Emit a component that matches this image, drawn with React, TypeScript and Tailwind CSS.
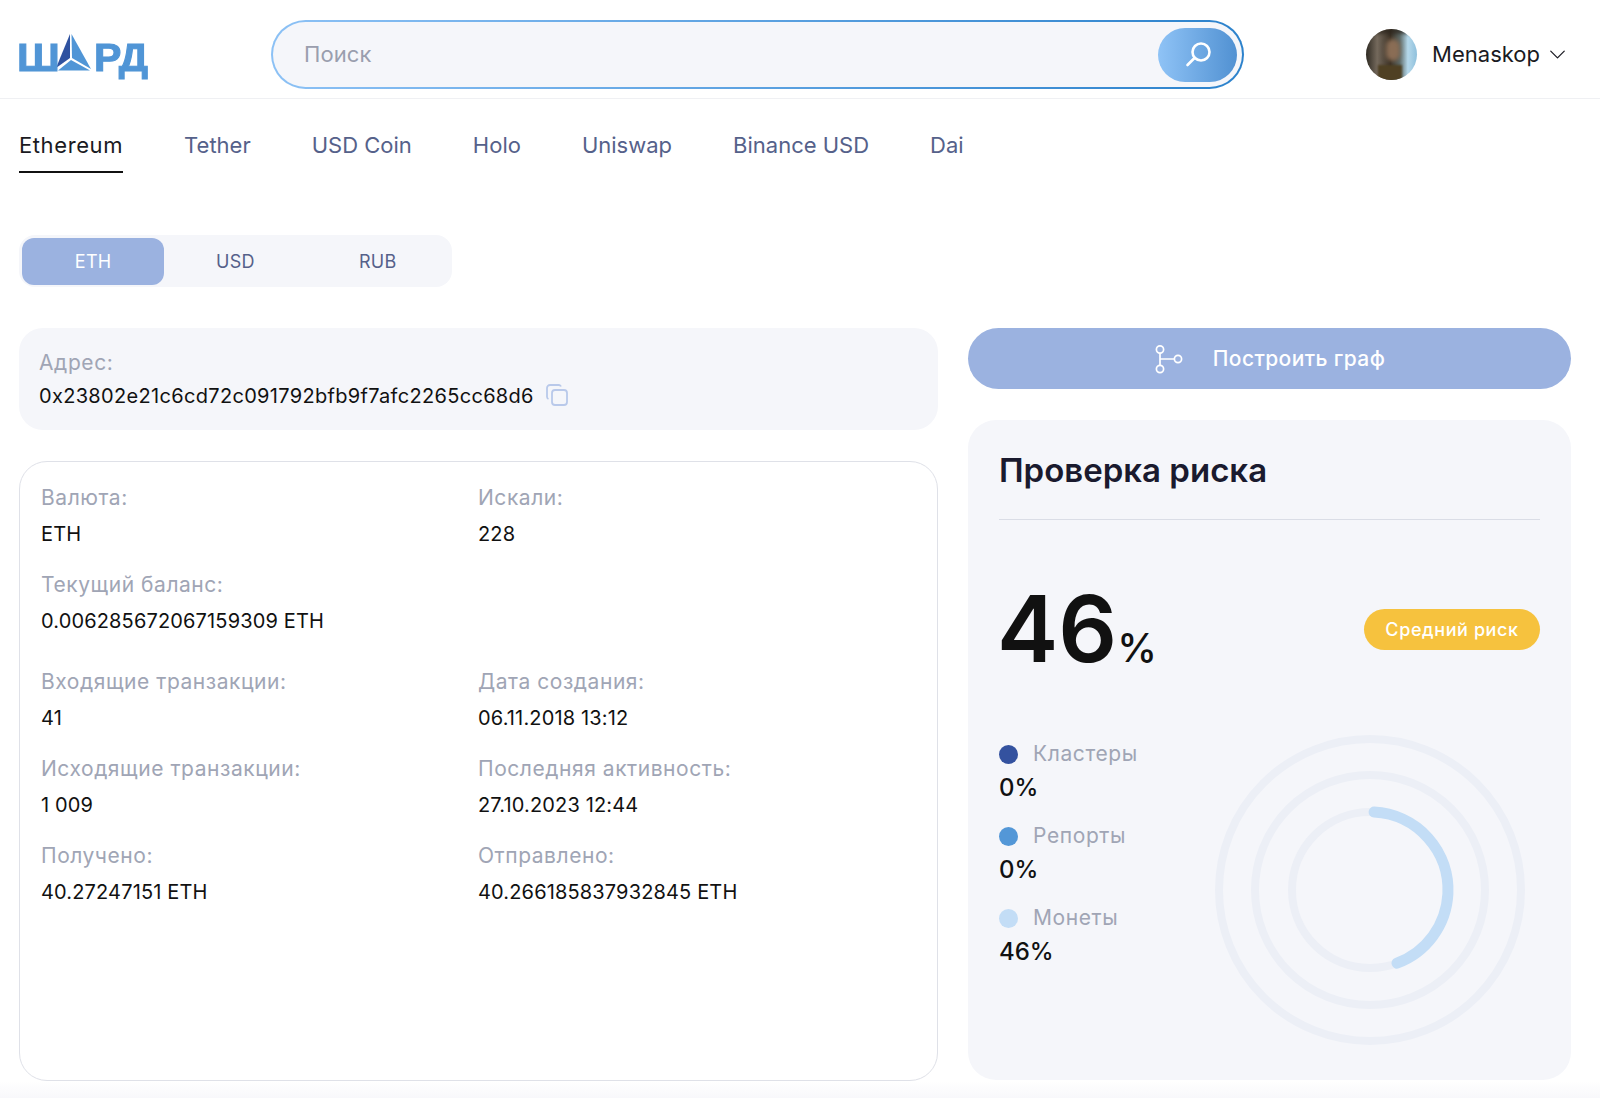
import { ChevronDown } from 'lucide-react';

const tabs = ['Ethereum', 'Tether', 'USD Coin', 'Holo', 'Uniswap', 'Binance USD', 'Dai'];

const details = [
  [['Валюта:', 'ETH'], ['Искали:', '228']],
  [['Текущий баланс:', '0.006285672067159309 ETH'], null],
  [['Входящие транзакции:', '41'], ['Дата создания:', '06.11.2018 13:12']],
  [['Исходящие транзакции:', '1 009'], ['Последняя активность:', '27.10.2023 12:44']],
  [['Получено:', '40.27247151 ETH'], ['Отправлено:', '40.266185837932845 ETH']],
];

const legend = [
  { label: 'Кластеры', value: '0%', dot: 'bg-[#34529f]' },
  { label: 'Репорты', value: '0%', dot: 'bg-[#5397d7]' },
  { label: 'Монеты', value: '46%', dot: 'bg-[#c3ddf6]' },
];

function Logo() {
  return (
    <div className="flex items-start h-[42px] w-[132px] pt-[7px] font-['Liberation_Sans',sans-serif] font-bold text-[#5095d6] text-[38px] leading-[34px] [-webkit-text-stroke:1px_#5095d6]">
      <span className="w-[38px] -ml-[2px] scale-x-[1.12] origin-left">Ш</span>
      <svg width="37" height="37" viewBox="0 0 37 37" className="shrink-0 -mt-[7px]">
        <polygon points="15,0 1,34 15,24" fill="#2f52a0" />
        <polygon points="16.5,0 36,35 17,24" fill="#5095d6" />
        <polygon points="16,26 3,36.5 35,36.5" fill="#5095d6" />
      </svg>
      <span className="ml-[2px] scale-x-[1.08] origin-left">РД</span>
    </div>
  );
}

function Avatar() {
  return (
    <div className="relative w-[51px] h-[51px] rounded-full overflow-hidden bg-[linear-gradient(90deg,#2e2a22_0%,#74695c_22%,#3a3024_48%,#5d6a68_66%,#b5d8ea_82%,#8fc0dc_100%)]">
      <div className="absolute left-[20px] top-[10px] w-[14px] h-[22px] rounded-full bg-[#8a6d55] blur-[2px]" />
      <div className="absolute left-[12px] top-[36px] w-[24px] h-[16px] bg-[#4f4023] blur-[1px]" />
      <div className="absolute inset-x-0 top-0 h-[4px] bg-[#2a241c] blur-[2px]" />
    </div>
  );
}

function DetailCell({ item }: { item: string[] | null }) {
  if (!item) return <div />;
  return (
    <div>
      <div className="text-[#a0a5b5] text-[21px] tracking-[0.55px] h-[36px] leading-[30px]">{item[0]}</div>
      <div className="text-[#111111] tracking-[0.15px] leading-[30px]">{item[1]}</div>
    </div>
  );
}

export default function App() {
  return (
    <div className="w-[1600px] h-[1098px] bg-white overflow-hidden font-['Inter',sans-serif] text-[20px]">
      <header className="flex items-center h-[99px] border-b border-[#eff0f3] pt-[11px] pl-[19px] pr-[29px]">
        <Logo />
        <div className="ml-[120px] w-[973px] h-[69px] rounded-full p-[2px] bg-[linear-gradient(90deg,#8cc1f5,#2c82cc)]">
          <div className="flex items-center justify-between h-full rounded-full bg-[#f5f6fa] pl-[31px] pr-[5px]">
            <span className="text-[#9a9eae] text-[22px] tracking-[0.1px]">Поиск</span>
            <button className="flex items-center justify-center w-[79px] h-[54px] rounded-full bg-[linear-gradient(90deg,#8fc3f6,#5191d2)]">
              <svg width="30" height="30" viewBox="0 0 30 30" fill="none" stroke="white" strokeWidth="2.6" strokeLinecap="round">
                <circle cx="18" cy="12" r="8.5" />
                <path d="M11.5 18 L4.5 25" />
              </svg>
            </button>
          </div>
        </div>
        <div className="ml-auto flex items-center">
          <Avatar />
          <span className="ml-[15px] text-[#1a1a22] text-[22px]">Menaskop</span>
          <ChevronDown className="ml-[4px] w-[27px] h-[27px] text-[#1a1a22]" strokeWidth={1.1} />
        </div>
      </header>

      <nav className="flex gap-[61px] pl-[19px] mt-[25px] h-[49px] text-[22px] text-[#55618a]">
        {tabs.map((t, i) => (
          <div key={t} className={i === 0 ? 'h-full pt-[5px] border-b-2 border-[#111111] text-[#1a1a22] tracking-[0.6px]' : 'h-full pt-[5px]'}>
            {t}
          </div>
        ))}
      </nav>

      <div className="ml-[19px] mt-[62px] flex items-center w-[433px] h-[52px] rounded-[16px] bg-[#f5f6fa] px-[3px] text-[18px] tracking-[0.3px] text-[#55618a]">
        <div className="w-[143px] h-[47px] flex items-center justify-center rounded-[12px] bg-[#9bb2e0] text-white">ETH</div>
        <div className="w-[143px] text-center">USD</div>
        <div className="w-[143px] text-center">RUB</div>
      </div>

      <div className="flex gap-[30px] pl-[19px] pr-[29px] mt-[41px]">
        <div className="w-[919px]">
          <div className="h-[102px] rounded-[24px] bg-[#f5f6fa] pl-[20px] pt-[18px]">
            <div className="text-[#a0a5b5] text-[21px] tracking-[0.6px] leading-[34px]">Адрес:</div>
            <div className="flex items-center text-[#111111] tracking-[0.32px] leading-[32px]">
              0x23802e21c6cd72c091792bfb9f7afc2265cc68d6
              <svg width="24" height="24" viewBox="0 0 24 24" fill="none" stroke="#b9c9ea" strokeWidth="1.8" className="ml-[11px] -mt-[2px]">
                <rect x="7" y="7" width="15" height="15" rx="3" />
                <path d="M16 3.5 A2.5 2.5 0 0 0 14 2 H5 A3 3 0 0 0 2 5 V14 A2.5 2.5 0 0 0 3.5 16" />
              </svg>
            </div>
          </div>

          <div className="mt-[31px] h-[620px] rounded-[28px] border border-[#dfe1e8] pl-[21px] pt-[21px]">
            {details.map((row, i) => (
              <div key={i} className={i === 2 ? 'grid grid-cols-[437px_1fr] mt-[31px]' : i === 0 ? 'grid grid-cols-[437px_1fr]' : 'grid grid-cols-[437px_1fr] mt-[21px]'}>
                <DetailCell item={row[0]} />
                <DetailCell item={row[1]} />
              </div>
            ))}
          </div>
        </div>

        <div className="flex-1">
          <button className="flex items-center justify-center w-full h-[61px] rounded-full bg-[#9bb2e0] text-white text-[21px] tracking-[0.4px] font-medium">
            <svg width="30" height="30" viewBox="0 0 30 30" fill="none" stroke="white" strokeWidth="1.7" className="mr-[29px]">
              <circle cx="6" cy="5.5" r="3.6" />
              <circle cx="6" cy="25" r="3.6" />
              <circle cx="24" cy="15" r="3.6" />
              <path d="M6 9 V21.5 M6 15 H20.5" />
            </svg>
            Построить граф
          </button>

          <div className="mt-[31px] h-[660px] rounded-[28px] bg-[#f5f6fa] px-[31px]">
            <div className="h-[100px] border-b border-[#dadde6] pt-[30px] text-[33px] leading-[40px] font-semibold text-[#1a1a2e]">
              Проверка риска
            </div>
            <div className="flex items-center justify-between mt-[59px] h-[100px]">
              <div className="flex items-baseline -ml-[2px] text-[#111111] font-semibold">
                <span className="text-[92px] leading-[100px]">46</span>
                <span className="text-[40px] font-medium">%</span>
              </div>
              <div className="flex items-center justify-center w-[176px] h-[41px] rounded-full bg-[#f6c23e] text-white text-[18px] tracking-[0.6px] font-medium">
                Средний риск
              </div>
            </div>
            <div className="flex mt-[58px]">
              <div className="w-[190px] shrink-0">
                {legend.map((l) => (
                  <div key={l.label} className="h-[82px]">
                    <div className="flex items-center h-[34px]">
                      <span className={`w-[19px] h-[19px] rounded-full ${l.dot}`} />
                      <span className="ml-[15px] text-[#a0a5b5] text-[21px] tracking-[0.6px]">{l.label}</span>
                    </div>
                    <div className="text-[#111111] text-[24px] font-medium leading-[34px]">{l.value}</div>
                  </div>
                ))}
              </div>
              <svg width="320" height="320" viewBox="0 0 320 320" fill="none" className="-mt-[7px] ml-[21px]">
                <circle cx="160" cy="160" r="151" stroke="#eceff6" strokeWidth="8" />
                <circle cx="160" cy="160" r="115" stroke="#eceff6" strokeWidth="8" />
                <circle cx="160" cy="160" r="78" stroke="#eceff6" strokeWidth="8" />
                <circle
                  cx="160"
                  cy="160"
                  r="78"
                  stroke="#c3ddf6"
                  strokeWidth="11"
                  strokeLinecap="round"
                  strokeDasharray="213 490"
                  transform="rotate(-87 160 160)"
                />
              </svg>
            </div>
          </div>
        </div>
      </div>
      <div className="h-[17px] bg-[linear-gradient(#ffffff,#f8f8fb)]" />
    </div>
  );
}
